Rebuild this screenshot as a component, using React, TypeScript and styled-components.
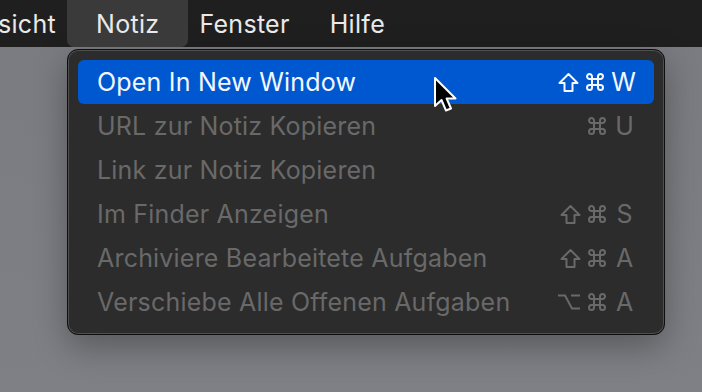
import { FunctionComponent } from "react";
import styled, { createGlobalStyle } from "styled-components";

const GlobalStyle = createGlobalStyle`
    html, body {
        margin: 0;
        padding: 0;
        width: 702px;
        height: 392px;
        overflow: hidden;
        background: #7c7d82;
        font-family: "Inter", "Liberation Sans", sans-serif;
        -webkit-font-smoothing: antialiased;
    }
`;

const Screen = styled.div`
    position: relative;
    width: 702px;
    height: 392px;
    display: flex;
    flex-direction: column;
    background: linear-gradient(180deg, #7a7b80 0%, #7d7e83 60%, #7f8085 100%);
    overflow: hidden;
`;

const MenuBar = styled.div`
    height: 47px;
    flex-shrink: 0;
    display: flex;
    align-items: stretch;
    background: #1f1f1f;
    color: #e9e9e9;
    font-size: 25px;
    letter-spacing: 0.3px;
`;

const BarItem = styled.div<{ $active?: boolean }>`
    position: relative;
    display: flex;
    align-items: center;
    padding: 0 20px;

    &:first-child {
        padding-left: 0;
        margin-left: -2px;
    }

    &::before {
        content: "";
        display: ${p => (p.$active ? "block" : "none")};
        position: absolute;
        top: 0;
        bottom: 0;
        left: -9px;
        right: -9px;
        background: #3a3a3a;
        border-radius: 0 0 7px 7px;
    }

    span {
        position: relative;
    }
`;

const Stage = styled.div`
    flex: 1;
    padding: 2px 0 0 67px;
`;

const Menu = styled.div`
    width: 596px;
    padding: 10px 0;
    background: #2c2c2c;
    border: 1px solid #0e0e0e;
    border-radius: 11px;
    box-shadow: inset 0 0 0 1px #4f4f4f, 0 12px 34px rgba(0, 0, 0, 0.3);
    display: flex;
    flex-direction: column;
`;

const Row = styled.div<{ $highlighted?: boolean }>`
    height: 44px;
    margin: 0 10px;
    padding: 0 18px 0 19px;
    display: flex;
    align-items: center;
    justify-content: space-between;
    border-radius: 6px;
    font-size: 25px;
    letter-spacing: 0.2px;
    background: ${p => (p.$highlighted ? "#0058d0" : "transparent")};
    color: ${p => (p.$highlighted ? "#f4f7ff" : "#696969")};
`;

const Shortcut = styled.div`
    display: flex;
    align-items: center;
    gap: 6px;
    letter-spacing: 0;
`;

const Key = styled.span`
    display: inline-block;
    min-width: 23px;
    text-align: center;
`;

const Symbol = styled.svg`
    display: block;
    fill: none;
    stroke: currentColor;
    stroke-width: 2;
    stroke-linejoin: round;
`;

const Cursor = styled.svg`
    position: absolute;
    left: 432px;
    top: 75px;
`;

const ShiftIcon = () => (
    <Symbol width="21" height="21" viewBox="0 0 21 21">
        <path d="M10.5 2 L19.5 11 L14.5 11 L14.5 19 L6.5 19 L6.5 11 L1.5 11 Z" />
    </Symbol>
);

const CommandIcon = () => (
    <Symbol width="20" height="20" viewBox="0 0 20 20">
        <path d="M7 7 V4.5 A2.5 2.5 0 1 0 4.5 7 H15.5 A2.5 2.5 0 1 0 13 4.5 V15.5 A2.5 2.5 0 1 0 15.5 13 H4.5 A2.5 2.5 0 1 0 7 15.5 Z" />
    </Symbol>
);

const OptionIcon = () => (
    <Symbol width="24" height="20" viewBox="0 0 24 20">
        <path d="M1 3.5 H8 L15 16.5 H23 M14 3.5 H23" strokeLinejoin="miter" />
    </Symbol>
);

const symbols: Record<string, () => JSX.Element> = {
    shift: ShiftIcon,
    cmd: CommandIcon,
    opt: OptionIcon,
};

interface MenuEntry {
    label: string;
    keys: string[];
    highlighted?: boolean;
}

const entries: MenuEntry[] = [
    { label: "Open In New Window", keys: ["shift", "cmd", "W"], highlighted: true },
    { label: "URL zur Notiz Kopieren", keys: ["cmd", "U"] },
    { label: "Link zur Notiz Kopieren", keys: [] },
    { label: "Im Finder Anzeigen", keys: ["shift", "cmd", "S"] },
    { label: "Archiviere Bearbeitete Aufgaben", keys: ["shift", "cmd", "A"] },
    { label: "Verschiebe Alle Offenen Aufgaben", keys: ["opt", "cmd", "A"] },
];

const App: FunctionComponent = () => (
    <>
        <GlobalStyle />
        <Screen>
            <MenuBar>
                <BarItem><span>sicht</span></BarItem>
                <BarItem $active><span>Notiz</span></BarItem>
                <BarItem><span>Fenster</span></BarItem>
                <BarItem><span>Hilfe</span></BarItem>
            </MenuBar>
            <Stage>
                <Menu>
                    {entries.map(entry => (
                        <Row key={entry.label} $highlighted={entry.highlighted}>
                            <span>{entry.label}</span>
                            <Shortcut>
                                {entry.keys.map(k => {
                                    const Icon = symbols[k];
                                    return Icon ? <Icon key={k} /> : <Key key={k}>{k}</Key>;
                                })}
                            </Shortcut>
                        </Row>
                    ))}
                </Menu>
            </Stage>
            <Cursor width="30" height="42" viewBox="0 0 30 42">
                <path d="M3 3 L3 31 L9.5 25 L14 35.5 L19 33.5 L14.6 23.5 L23.5 23.5 Z"
                    fill="#000" stroke="#fff" strokeWidth="2" strokeLinejoin="round" />
            </Cursor>
        </Screen>
    </>
);

export default App;
